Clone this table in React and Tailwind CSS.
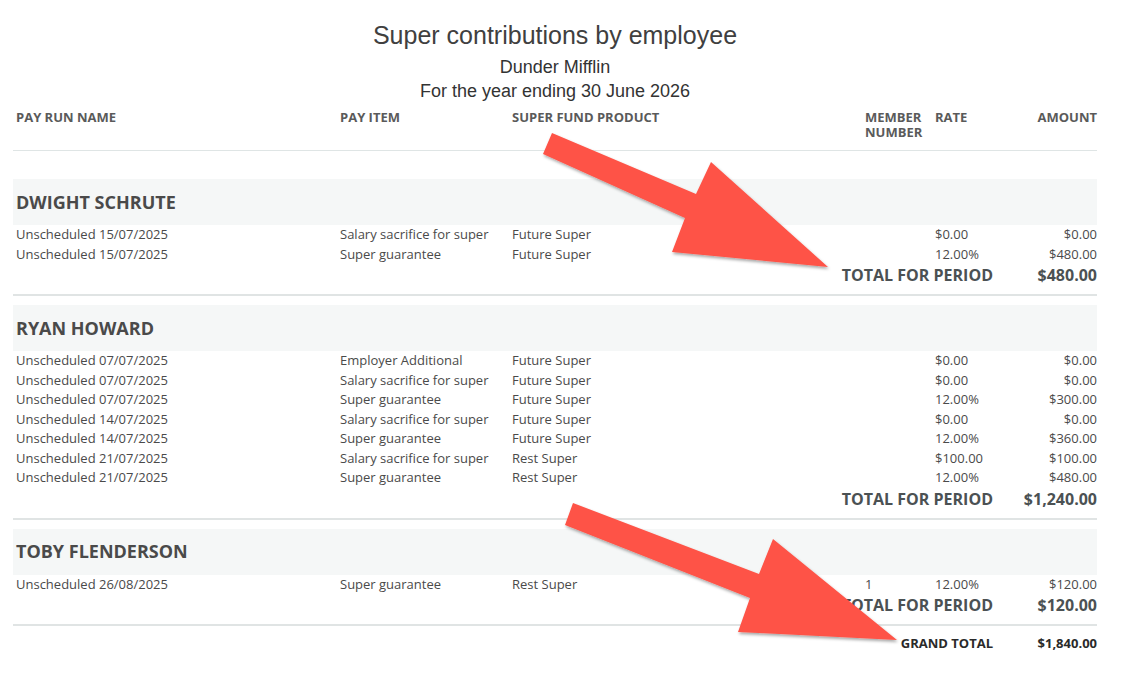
import React from 'react';

const employees = [
  {
    name: 'DWIGHT SCHRUTE',
    total: '$480.00',
    rows: [
      ['Unscheduled 15/07/2025', 'Salary sacrifice for super', 'Future Super', '', '$0.00', '$0.00'],
      ['Unscheduled 15/07/2025', 'Super guarantee', 'Future Super', '', '12.00%', '$480.00'],
    ],
  },
  {
    name: 'RYAN HOWARD',
    total: '$1,240.00',
    rows: [
      ['Unscheduled 07/07/2025', 'Employer Additional', 'Future Super', '', '$0.00', '$0.00'],
      ['Unscheduled 07/07/2025', 'Salary sacrifice for super', 'Future Super', '', '$0.00', '$0.00'],
      ['Unscheduled 07/07/2025', 'Super guarantee', 'Future Super', '', '12.00%', '$300.00'],
      ['Unscheduled 14/07/2025', 'Salary sacrifice for super', 'Future Super', '', '$0.00', '$0.00'],
      ['Unscheduled 14/07/2025', 'Super guarantee', 'Future Super', '', '12.00%', '$360.00'],
      ['Unscheduled 21/07/2025', 'Salary sacrifice for super', 'Rest Super', '', '$100.00', '$100.00'],
      ['Unscheduled 21/07/2025', 'Super guarantee', 'Rest Super', '', '12.00%', '$480.00'],
    ],
  },
  {
    name: 'TOBY FLENDERSON',
    total: '$120.00',
    rows: [
      ['Unscheduled 26/08/2025', 'Super guarantee', 'Rest Super', '1', '12.00%', '$120.00'],
    ],
  },
];

const cols = 'grid grid-cols-[324px_172px_353px_70px_65px_100px]';

const Arrow = ({ points }) => (
  <polygon points={points} fill="#fe5347" filter="url(#arrowShadow)" />
);

export default function App() {
  return (
    <div className="relative w-[1129px] h-[686px] bg-white overflow-hidden">
      <div className="ml-[13px] w-[1084px] font-['Open_Sans',sans-serif]">
        {/* Report title */}
        <div className="pt-5 text-center text-[#404040] font-['Liberation_Sans',Arial,sans-serif]">
          <h1 className="text-[25px] leading-[30px]">Super contributions by employee</h1>
          <div className="mt-[5px] text-[18px] leading-6 text-[#333]">Dunder Mifflin</div>
          <div className="text-[18px] leading-6 text-[#333]">For the year ending 30 June 2026</div>
        </div>

        {/* Column headings */}
        <div className={`${cols} mt-[7px] pb-[10px] border-b border-[#dfe5e5] text-[13px] leading-[15px] font-bold text-[#5a5a5a]`}>
          <div className="pl-[3px]">PAY RUN NAME</div>
          <div className="pl-[3px]">PAY ITEM</div>
          <div className="pl-[3px]">SUPER FUND PRODUCT</div>
          <div className="pl-[3px]">MEMBER<br />NUMBER</div>
          <div className="pl-[3px]">RATE</div>
          <div className="text-right">AMOUNT</div>
        </div>

        <div className="h-[28px]" />

        {employees.map((emp, i) => (
          <div key={emp.name}>
            <div className="h-[46px] bg-[#f5f7f7] flex items-center pl-[3px] text-[18px] font-bold text-[#4a4a4a]">
              {emp.name}
            </div>
            {emp.rows.map((r, j) => (
              <div key={j} className={`${cols} h-[19.5px] items-center text-[13px] text-[#4a4a4a]`}>
                <div className="pl-[3px]">{r[0]}</div>
                <div className="pl-[3px]">{r[1]}</div>
                <div className="pl-[3px]">{r[2]}</div>
                <div className="pl-[3px]">{r[3]}</div>
                <div className="pl-[3px]">{r[4]}</div>
                <div className="text-right">{r[5]}</div>
              </div>
            ))}
            <div className="flex justify-end h-[22px] items-center text-[16px] font-bold text-[#4b5153]">
              <div>TOTAL FOR PERIOD</div>
              <div className="w-[104px] text-right">{emp.total}</div>
            </div>
            <div className="mt-[8px] h-[2px] bg-[#e0e4e4]" />
            {i < employees.length - 1 && <div className="h-[9px]" />}
          </div>
        ))}

        <div className="flex justify-end pt-[8px] text-[13px] leading-[18px] font-bold text-[#2a2a2a]">
          <div>GRAND TOTAL</div>
          <div className="w-[104px] text-right">$1,840.00</div>
        </div>
      </div>

      {/* Annotation arrows */}
      <svg className="absolute left-0 top-0 pointer-events-none" width="1129" height="686" viewBox="0 0 1129 686">
        <defs>
          <filter id="arrowShadow" x="-10%" y="-10%" width="130%" height="130%">
            <feDropShadow dx="1" dy="2" stdDeviation="1.5" floodColor="#000" floodOpacity="0.35" />
          </filter>
        </defs>
        <Arrow points="552,133 696,194 711,162 828,267 672,252 685,218 543,154" />
        <Arrow points="573,503 759,574 773,539 897,640 738,632 750,598 565,525" />
      </svg>
    </div>
  );
}
